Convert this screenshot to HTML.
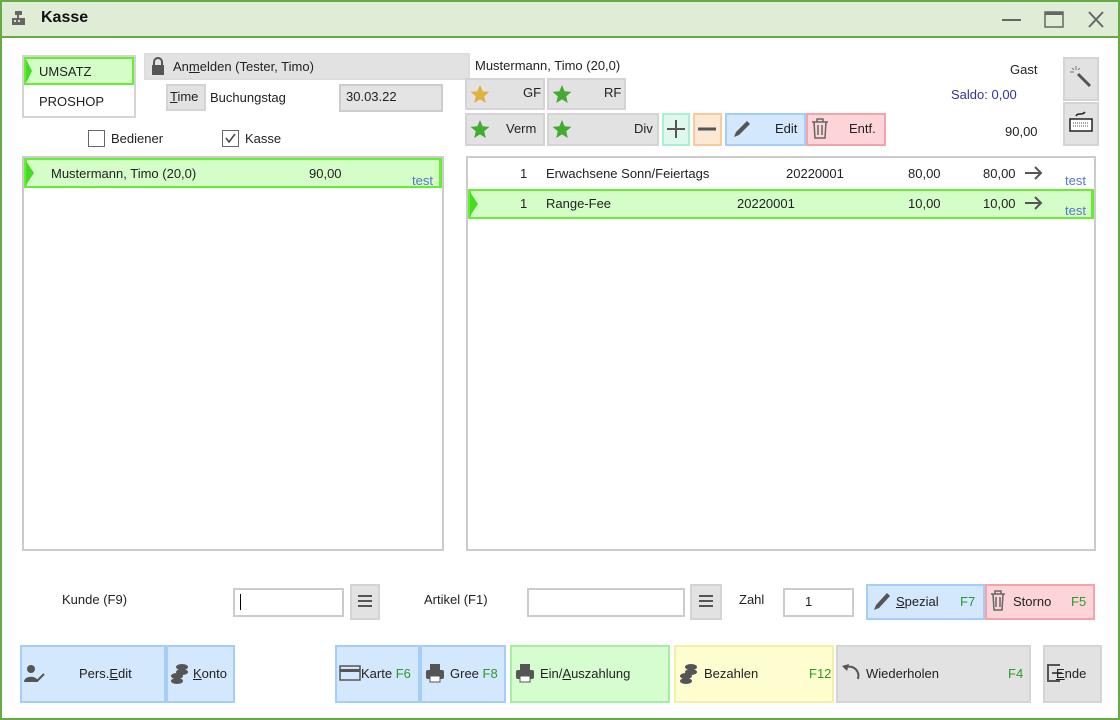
<!DOCTYPE html>
<html><head><meta charset="utf-8"><style>
*{box-sizing:border-box;margin:0;padding:0}
body{width:1120px;height:720px;background:#fff;font-family:"Liberation Sans",sans-serif;font-size:13px;color:#222;position:relative;overflow:hidden}
.a{position:absolute}
.btn{position:absolute;background:#e2e2e2;border:2px solid #d4d4d4}
.t{position:absolute;white-space:nowrap}
.fk{color:#2a9a2a}
.blue{background:#d3e7fd;border:2px solid #a6cdf7}
.red{background:#fdd5d8;border:2px solid #f4a3aa}
.green{background:#d6fdd0;border:2px solid #a5f0a0}
.yel{background:#fdfdd0;border:2px solid #f0f0a8}
.grn{background:#d4fdc8;border:2px solid #66ee33}
u{text-decoration:underline}
</style></head><body>
<div class="a" style="left:0;top:0;width:1120px;height:720px;border:2px solid #66aa44"></div>
<div class="a" style="left:2px;top:2px;width:1116px;height:36px;background:#dfedd6;border-bottom:2px solid #66aa44"></div>
<svg class="a" style="left:11px;top:10px" width="16" height="16"><rect x="4" y="1" width="7" height="4" fill="#666"/><rect x="6" y="5" width="2" height="3" fill="#666"/><rect x="1" y="8" width="13" height="7" fill="#666"/><rect x="3" y="10" width="2" height="2" fill="#ddd"/><rect x="7" y="10" width="2" height="2" fill="#ddd"/></svg>
<div class="t" style="left:41px;top:9px;font-size:16px;font-weight:bold;color:#111">Kasse</div>
<svg class="a" style="left:1000px;top:8px" width="110" height="24"><line x1="2" y1="12" x2="21" y2="12" stroke="#666" stroke-width="2"/><rect x="45" y="4" width="18" height="15" fill="none" stroke="#666" stroke-width="1.5"/><rect x="45" y="4" width="18" height="3" fill="#666"/><path d="M89 4L103 19M103 4L89 19" stroke="#666" stroke-width="2"/></svg>

<div class="a" style="left:22px;top:55px;width:114px;height:63px;border:2px solid #d4d4d4"></div>
<div class="a grn" style="left:24px;top:57px;width:110px;height:28px"></div>
<svg class="a" style="left:26px;top:59px" width="6" height="24"><path d="M0 0L6 12L0 24Z" fill="#44dd22"/></svg>
<div class="t" style="left:39px;top:64px">UMSATZ</div>
<div class="t" style="left:39px;top:94px">PROSHOP</div>

<div class="btn" style="left:144px;top:53px;width:326px;height:27px;border-color:#ddd"></div>
<svg class="a" style="left:151px;top:57px" width="14" height="18"><path d="M3 8V5a4 4 0 0 1 8 0v3" fill="none" stroke="#555" stroke-width="2"/><rect x="1" y="8" width="12" height="10" fill="#555"/></svg>
<div class="t" style="left:173px;top:59px">An<u>m</u>elden (Tester, Timo)</div>
<div class="btn" style="left:166px;top:84px;width:40px;height:27px"></div>
<div class="t" style="left:170px;top:89px"><u>T</u>ime</div>
<div class="t" style="left:210px;top:90px">Buchungstag</div>
<div class="a" style="left:339px;top:84px;width:104px;height:28px;background:#e4e4e4;border:2px solid #ccc"></div>
<div class="t" style="left:346px;top:89px">30.03.22</div>

<div class="a" style="left:88px;top:130px;width:17px;height:17px;border:1.5px solid #666;background:#fff"></div>
<div class="t" style="left:111px;top:131px">Bediener</div>
<div class="a" style="left:222px;top:130px;width:17px;height:17px;border:1.5px solid #666;background:#fff"></div>
<svg class="a" style="left:222px;top:130px" width="17" height="17"><path d="M4 8L7 12L13 4" fill="none" stroke="#444" stroke-width="1.5"/></svg>
<div class="t" style="left:245px;top:131px">Kasse</div>

<div class="a" style="left:22px;top:156px;width:422px;height:395px;border:2px solid #ccc"></div>
<div class="a grn" style="left:24px;top:158px;width:418px;height:30px;border-width:2px 3px"></div>
<svg class="a" style="left:26px;top:161px" width="8" height="24"><path d="M0 0L8 12L0 24Z" fill="#44dd22"/></svg>
<div class="t" style="left:51px;top:166px">Mustermann, Timo (20,0)</div>
<div class="t" style="left:309px;top:166px">90,00</div>
<div class="t" style="left:412px;top:173px;color:#5577cc">test</div>

<div class="t" style="left:475px;top:58px">Mustermann, Timo (20,0)</div>
<div class="btn" style="left:465px;top:78px;width:80px;height:32px"></div>
<div class="btn" style="left:547px;top:78px;width:79px;height:32px"></div>
<div class="btn" style="left:465px;top:113px;width:80px;height:33px"></div>
<div class="btn" style="left:547px;top:113px;width:112px;height:33px"></div>
<svg class="a" style="left:470px;top:84px" width="20" height="20"><path d="M10 1L12.6 7.3L19.4 7.9L14.2 12.3L15.8 19L10 15.4L4.2 19L5.8 12.3L0.6 7.9L7.4 7.3Z" fill="#e0b040"/></svg>
<svg class="a" style="left:552px;top:84px" width="20" height="20"><path d="M10 1L12.6 7.3L19.4 7.9L14.2 12.3L15.8 19L10 15.4L4.2 19L5.8 12.3L0.6 7.9L7.4 7.3Z" fill="#44aa33"/></svg>
<svg class="a" style="left:470px;top:119px" width="20" height="20"><path d="M10 1L12.6 7.3L19.4 7.9L14.2 12.3L15.8 19L10 15.4L4.2 19L5.8 12.3L0.6 7.9L7.4 7.3Z" fill="#44aa33"/></svg>
<svg class="a" style="left:552px;top:119px" width="20" height="20"><path d="M10 1L12.6 7.3L19.4 7.9L14.2 12.3L15.8 19L10 15.4L4.2 19L5.8 12.3L0.6 7.9L7.4 7.3Z" fill="#44aa33"/></svg>
<div class="t" style="left:523px;top:85px">GF</div>
<div class="t" style="left:604px;top:85px">RF</div>
<div class="t" style="left:506px;top:121px">Verm</div>
<div class="t" style="left:634px;top:121px">Div</div>
<div class="a" style="left:662px;top:113px;width:28px;height:33px;background:#e0f7ee;border:2px solid #a8f0d0"></div>
<svg class="a" style="left:666px;top:119px" width="20" height="20"><path d="M10 1V19M1 10H19" stroke="#555" stroke-width="2"/></svg>
<div class="a" style="left:693px;top:113px;width:29px;height:33px;background:#fde8d5;border:2px solid #fbc99a"></div>
<svg class="a" style="left:697px;top:119px" width="20" height="20"><path d="M1 10H19" stroke="#555" stroke-width="3"/></svg>
<div class="a blue" style="left:725px;top:113px;width:81px;height:33px"></div>
<svg class="a" style="left:731px;top:118px" width="22" height="22"><path d="M3 19L5 14L16 3L19 6L8 17Z" fill="#555"/></svg>
<div class="t" style="left:775px;top:121px">Edit</div>
<div class="a red" style="left:806px;top:113px;width:80px;height:33px"></div>
<svg class="a" style="left:810px;top:117px" width="20" height="24"><path d="M2 5H18M7 5V2H13V5M4 5L5 21H15L16 5M8 8V18M12 8V18" fill="none" stroke="#666" stroke-width="1.5"/></svg>
<div class="t" style="left:849px;top:121px">Entf.</div>

<div class="t" style="left:1010px;top:62px">Gast</div>
<div class="t" style="left:951px;top:87px;color:#333399">Saldo: 0,00</div>
<div class="t" style="left:1005px;top:124px">90,00</div>
<div class="btn" style="left:1063px;top:57px;width:36px;height:44px"></div>
<svg class="a" style="left:1069px;top:65px" width="24" height="24"><path d="M9 9L21 21" stroke="#555" stroke-width="3"/><path d="M7 1V5M3 3L5 5M1 7H5M11 3L9 5" stroke="#888" stroke-width="1.2"/></svg>
<div class="btn" style="left:1063px;top:102px;width:36px;height:44px"></div>
<svg class="a" style="left:1068px;top:110px" width="26" height="26"><path d="M8 6C10 2 14 6 17 2" fill="none" stroke="#222" stroke-width="1.5"/><rect x="2" y="9" width="22" height="12" fill="#fff" stroke="#222" stroke-width="1.5"/><path d="M5 13H21M5 16H21" stroke="#555" stroke-dasharray="1 1"/></svg>

<div class="a" style="left:466px;top:156px;width:630px;height:395px;border:2px solid #ccc"></div>
<div class="t" style="left:520px;top:166px">1</div>
<div class="t" style="left:546px;top:166px">Erwachsene Sonn/Feiertags</div>
<div class="t" style="left:786px;top:166px">20220001</div>
<div class="t" style="left:908px;top:166px">80,00</div>
<div class="t" style="left:983px;top:166px">80,00</div>
<svg class="a" style="left:1024px;top:165px" width="20" height="16"><path d="M1 8H17M11 2L17 8L11 14" fill="none" stroke="#555" stroke-width="2"/></svg>
<div class="t" style="left:1065px;top:173px;color:#5577cc">test</div>
<div class="a grn" style="left:468px;top:189px;width:626px;height:30px;border-width:2px 3px"></div>
<svg class="a" style="left:470px;top:192px" width="8" height="24"><path d="M0 0L8 12L0 24Z" fill="#44dd22"/></svg>
<div class="t" style="left:520px;top:196px">1</div>
<div class="t" style="left:546px;top:196px">Range-Fee</div>
<div class="t" style="left:737px;top:196px">20220001</div>
<div class="t" style="left:908px;top:196px">10,00</div>
<div class="t" style="left:983px;top:196px">10,00</div>
<svg class="a" style="left:1024px;top:195px" width="20" height="16"><path d="M1 8H17M11 2L17 8L11 14" fill="none" stroke="#555" stroke-width="2"/></svg>
<div class="t" style="left:1065px;top:203px;color:#5577cc">test</div>

<div class="t" style="left:62px;top:592px">Kunde (F9)</div>
<div class="a" style="left:233px;top:588px;width:111px;height:29px;border:2px solid #ccc"></div>
<div class="a" style="left:240px;top:594px;width:1px;height:16px;background:#000"></div>
<div class="btn" style="left:350px;top:584px;width:30px;height:36px"></div>
<svg class="a" style="left:357px;top:594px" width="16" height="14"><path d="M1 2H15M1 7H15M1 12H15" stroke="#555" stroke-width="2"/></svg>
<div class="t" style="left:424px;top:592px">Artikel (F1)</div>
<div class="a" style="left:527px;top:588px;width:158px;height:29px;border:2px solid #ccc"></div>
<div class="btn" style="left:690px;top:584px;width:32px;height:36px"></div>
<svg class="a" style="left:698px;top:594px" width="16" height="14"><path d="M1 2H15M1 7H15M1 12H15" stroke="#555" stroke-width="2"/></svg>
<div class="t" style="left:739px;top:592px">Zahl</div>
<div class="a" style="left:783px;top:588px;width:71px;height:29px;border:2px solid #ccc"></div>
<div class="t" style="left:805px;top:594px">1</div>
<div class="a blue" style="left:866px;top:584px;width:119px;height:36px"></div>
<svg class="a" style="left:871px;top:590px" width="22" height="22"><path d="M3 20L5 15L16 3L19 6L8 18Z" fill="#555"/></svg>
<div class="t" style="left:896px;top:594px"><u>S</u>pezial</div>
<div class="t fk" style="left:960px;top:594px">F7</div>
<div class="a red" style="left:985px;top:584px;width:110px;height:36px"></div>
<svg class="a" style="left:989px;top:589px" width="18" height="24"><path d="M2 5H16M6 5V2H12V5M4 5L5 21H13L14 5M7 8V18M11 8V18" fill="none" stroke="#666" stroke-width="1.5"/></svg>
<div class="t" style="left:1013px;top:594px">Storno</div>
<div class="t fk" style="left:1071px;top:594px">F5</div>

<div class="a blue" style="left:20px;top:645px;width:146px;height:58px"></div>
<svg class="a" style="left:24px;top:664px" width="22" height="20"><circle cx="7" cy="5" r="4" fill="#555"/><path d="M0 18C0 11 14 11 14 18Z" fill="#555"/><path d="M13 17L20 10" stroke="#555" stroke-width="2"/></svg>
<div class="t" style="left:79px;top:666px">Pers.<u>E</u>dit</div>
<div class="a blue" style="left:166px;top:645px;width:69px;height:58px"></div>
<svg class="a" style="left:171px;top:663px" width="18" height="22"><ellipse cx="11" cy="4" rx="6" ry="3" fill="#555"/><ellipse cx="11" cy="9" rx="6" ry="3" fill="#555"/><ellipse cx="6" cy="13" rx="6" ry="3" fill="#555"/><ellipse cx="6" cy="18" rx="6" ry="3" fill="#555"/></svg>
<div class="t" style="left:193px;top:666px"><u>K</u>onto</div>
<div class="a blue" style="left:335px;top:645px;width:85px;height:58px"></div>
<svg class="a" style="left:339px;top:665px" width="22" height="16"><rect x="1" y="1" width="20" height="14" fill="none" stroke="#555" stroke-width="1.5"/><rect x="1" y="4" width="20" height="3" fill="#555"/></svg>
<div class="t" style="left:361px;top:666px">Karte <span class="fk">F6</span></div>
<div class="a blue" style="left:420px;top:645px;width:86px;height:58px"></div>
<svg class="a" style="left:425px;top:663px" width="20" height="20"><rect x="5" y="1" width="10" height="6" fill="#555"/><rect x="1" y="7" width="18" height="9" rx="2" fill="#555"/><rect x="5" y="13" width="10" height="6" fill="#fff" stroke="#555"/></svg>
<div class="t" style="left:450px;top:666px">Gree <span class="fk">F8</span></div>
<div class="a green" style="left:510px;top:645px;width:160px;height:58px"></div>
<svg class="a" style="left:515px;top:663px" width="20" height="20"><rect x="5" y="1" width="10" height="6" fill="#555"/><rect x="1" y="7" width="18" height="9" rx="2" fill="#555"/><rect x="5" y="13" width="10" height="6" fill="#fff" stroke="#555"/></svg>
<div class="t" style="left:540px;top:666px">Ein/<u>A</u>uszahlung</div>
<div class="a yel" style="left:674px;top:645px;width:160px;height:58px"></div>
<svg class="a" style="left:680px;top:663px" width="18" height="22"><ellipse cx="11" cy="4" rx="6" ry="3" fill="#555"/><ellipse cx="11" cy="9" rx="6" ry="3" fill="#555"/><ellipse cx="6" cy="13" rx="6" ry="3" fill="#555"/><ellipse cx="6" cy="18" rx="6" ry="3" fill="#555"/></svg>
<div class="t" style="left:704px;top:666px">Bezahlen</div>
<div class="t fk" style="left:809px;top:666px">F12</div>
<div class="btn" style="left:836px;top:645px;width:195px;height:58px"></div>
<svg class="a" style="left:840px;top:663px" width="22" height="20"><path d="M6 4C14 2 20 8 18 16" fill="none" stroke="#555" stroke-width="2"/><path d="M2 3L9 1L7 8Z" fill="#555"/></svg>
<div class="t" style="left:866px;top:666px">Wiederholen</div>
<div class="t fk" style="left:1008px;top:666px">F4</div>
<div class="btn" style="left:1043px;top:645px;width:59px;height:58px"></div>
<svg class="a" style="left:1046px;top:663px" width="16" height="20"><path d="M14 2H2V18H14" fill="none" stroke="#555" stroke-width="2"/><path d="M6 10H16" stroke="#555" stroke-width="2"/></svg>
<div class="t" style="left:1056px;top:666px"><u>E</u>nde</div>
</body></html>
